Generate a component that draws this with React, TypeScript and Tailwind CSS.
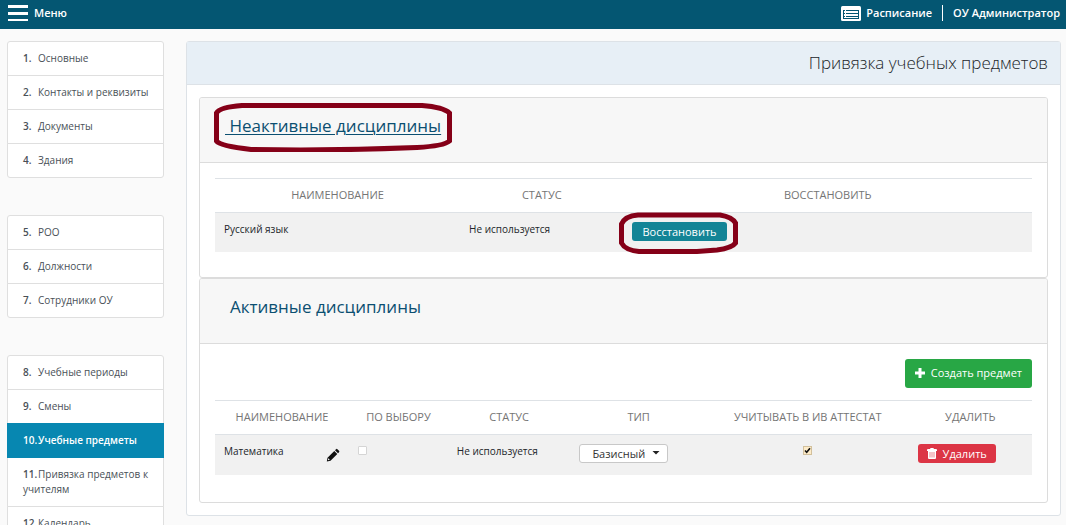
type MenuItem = { n: number; label: string; active?: boolean };

const groups: MenuItem[][] = [
  [
    { n: 1, label: "Основные" },
    { n: 2, label: "Контакты и реквизиты" },
    { n: 3, label: "Документы" },
    { n: 4, label: "Здания" },
  ],
  [
    { n: 5, label: "РОО" },
    { n: 6, label: "Должности" },
    { n: 7, label: "Сотрудники ОУ" },
  ],
  [
    { n: 8, label: "Учебные периоды" },
    { n: 9, label: "Смены" },
    { n: 10, label: "Учебные предметы", active: true },
    { n: 11, label: "Привязка предметов к учителям" },
    { n: 12, label: "Календарь" },
  ],
];

function TopBar() {
  return (
    <header className="flex h-[29px] shrink-0 items-center justify-between bg-[#045672] pr-[6px] pb-[3px] pl-2 text-[11px] leading-4 font-semibold text-white">
      <button type="button" className="flex items-center gap-[6px]">
        <svg viewBox="0 0 20 16" className="h-4 w-5" fill="currentColor" aria-hidden="true">
          <rect width="20" height="3" />
          <rect y="7" width="20" height="3" />
          <rect y="14" width="20" height="2" />
        </svg>
        Меню
      </button>
      <div className="flex items-center">
        <a href="#schedule" className="flex items-center gap-[5px] pr-[10px]">
          <svg viewBox="0 0 20 15" className="h-[15px] w-5" aria-hidden="true">
            <rect width="20" height="15" rx="1.5" fill="#fff" />
            <path
              d="M2 4.5h2M5 4.5h13M2 7.5h2M5 7.5h13M2 10.5h2M5 10.5h13M2 12.5h16M2.5 4v9M17.5 4v9"
              fill="none"
              stroke="#045672"
              strokeWidth="1"
            />
          </svg>
          Расписание
        </a>
        <a href="#account" className="border-l border-white pl-[10px]">
          ОУ Администратор
        </a>
      </div>
    </header>
  );
}

function SideMenu() {
  return (
    <nav className="flex w-[157px] shrink-0 flex-col gap-[37px]">
      {groups.map((items) => (
        <ul key={items[0].n}>
          {items.map((item) => (
            <li key={item.n} className="group -mb-px last:mb-0">
              <a
                href={`#item-${item.n}`}
                className={
                  item.active
                    ? "relative block border border-[#0787b1] bg-[#0787b1] py-[9px] pr-3 pl-[15px] text-[10px] leading-[15px] font-semibold text-white"
                    : "block border border-[#dfdfdf] bg-white py-[9px] pr-3 pl-[15px] text-[10px] leading-[15px] text-[#495057] group-first:rounded-t-[3px] group-last:rounded-b-[3px]"
                }
              >
                <span className="inline-block min-w-[15px] font-semibold">{item.n}.</span>
                {item.label}
              </a>
            </li>
          ))}
        </ul>
      ))}
    </nav>
  );
}

const th = "pt-[7px] pb-[9px] text-center text-[11px] leading-[17px] font-normal text-[#757575]";
const td = "px-[9px] pt-[9px] align-top leading-[15px]";

function InactiveCard() {
  return (
    <section className="rounded-[3px] border border-[#dcdcdc] bg-white">
      <div className="h-[65px] rounded-t-[2px] border-b border-[#dcdcdc] bg-[#f7f7f7] px-[25px] pt-4">
        <h2 className="relative inline-block text-[17px] leading-6 whitespace-pre text-[#0b4f71] underline decoration-1 underline-offset-2">
          {" Неактивные дисциплины"}
          <svg
            viewBox="0 0 238 49"
            preserveAspectRatio="none"
            className="absolute -top-[11px] -left-[11px] h-[49px] w-[238px] max-w-none"
            fill="none"
            aria-hidden="true"
          >
            <path
              d="M28 2.5H208Q229 4 235.5 10V38Q230 43 203 44.5Q120 48 37 46.5Q6 43 2.5 38V10Q6 4 28 2.5Z"
              stroke="#850018"
              strokeWidth="5"
            />
          </svg>
        </h2>
      </div>
      <div className="px-[15px] pt-[15px] pb-[25px]">
        <table className="w-full table-fixed border-collapse">
          <thead>
            <tr className="border-y border-[#dee2e6]">
              <th className={`${th} w-[30%]`}>НАИМЕНОВАНИЕ</th>
              <th className={`${th} w-[20%]`}>СТАТУС</th>
              <th className={`${th} w-[50%]`}>ВОССТАНОВИТЬ</th>
            </tr>
          </thead>
          <tbody>
            <tr className="h-[39px] bg-[#f1f1f1]">
              <td className={td}>Русский язык</td>
              <td className={td}>Не используется</td>
              <td className={td}>
                <span className="relative inline-block">
                  <button
                    type="button"
                    className="block h-[19px] rounded-[3px] bg-[#138496] px-[10px] text-[11px] leading-[19px] text-white"
                  >
                    Восстановить
                  </button>
                  <svg
                    viewBox="0 0 119 42"
                    preserveAspectRatio="none"
                    className="absolute -top-[10px] -left-[13px] h-[42px] w-[119px] max-w-none"
                    fill="none"
                    aria-hidden="true"
                  >
                    <path
                      d="M19 3H101Q113 5 116.5 11V31Q113 36 98 38L78 39.5H20Q6 38 2.5 31V12Q6 4 19 3Z"
                      stroke="#850018"
                      strokeWidth="5"
                    />
                  </svg>
                </span>
              </td>
            </tr>
          </tbody>
        </table>
      </div>
    </section>
  );
}

function ActiveCard() {
  return (
    <section className="rounded-[3px] border border-[#dcdcdc] bg-white">
      <div className="h-[65px] rounded-t-[2px] border-b border-[#dcdcdc] bg-[#f7f7f7] px-[30px] pt-4">
        <h2 className="text-[17px] leading-6 text-[#0b4f71]">Активные дисциплины</h2>
      </div>
      <div className="px-[15px] pt-[15px] pb-[27px]">
        <div className="mb-3 flex justify-end">
          <button
            type="button"
            className="flex h-[29px] items-center gap-[6px] rounded-[3px] bg-[#28a745] px-[10px] text-[11px] leading-4 font-medium text-white"
          >
            <svg viewBox="0 0 10 10" className="size-[10px]" fill="currentColor" aria-hidden="true">
              <path d="M3.5 0h3v3.5H10v3H6.5V10h-3V6.5H0v-3h3.5z" />
            </svg>
            Создать предмет
          </button>
        </div>
        <table className="w-full table-fixed border-collapse">
          <thead>
            <tr className="border-y border-[#dee2e6]">
              <th className={`${th} w-[16.4%]`}>НАИМЕНОВАНИЕ</th>
              <th className={`${th} w-[12.1%]`}>ПО ВЫБОРУ</th>
              <th className={`${th} w-[15%]`}>СТАТУС</th>
              <th className={`${th} w-[16.7%]`}>ТИП</th>
              <th className={`${th} w-[24.7%]`}>УЧИТЫВАТЬ В ИВ АТТЕСТАТ</th>
              <th className={`${th} w-[15.1%]`}>УДАЛИТЬ</th>
            </tr>
          </thead>
          <tbody>
            <tr className="h-[41px] bg-[#f1f1f1]">
              <td className={td}>
                <div className="flex justify-between">
                  Математика
                  <button type="button" aria-label="Редактировать" className="pt-1">
                    <svg viewBox="0 0 14 14" className="size-[14px]" fill="#111" aria-hidden="true">
                      <path
                        d="M10 1.2q.7-.7 1.4 0l1.6 1.6q.7.7 0 1.4l-1 1-3-3zM8.3 2.9l3 3-6.8 6.8-3.7.9.7-3.9zM2.3 10.3l-.4 1.9 1.9-.4z"
                        fillRule="evenodd"
                      />
                    </svg>
                  </button>
                </div>
              </td>
              <td className={td}>
                <input
                  type="checkbox"
                  aria-label="По выбору"
                  className="mt-[2px] block size-[9px] appearance-none rounded-[1px] border border-[#d5d5d5] bg-white"
                />
              </td>
              <td className={td}>Не используется</td>
              <td className={td}>
                <div className="relative w-[89px]">
                  <select
                    aria-label="Тип"
                    className="block h-[19px] w-full appearance-none rounded-[3px] border border-[#c8c8c8] bg-white pl-3 text-[11px] leading-[17px] text-[#333]"
                  >
                    <option>Базисный</option>
                  </select>
                  <svg
                    viewBox="0 0 8 4"
                    className="pointer-events-none absolute top-[7px] right-2 h-1 w-2"
                    fill="#222"
                    aria-hidden="true"
                  >
                    <path d="M0.5 0h7L4 3.5z" />
                  </svg>
                </div>
              </td>
              <td className={td}>
                <div className="relative mx-auto mt-[2px] size-[9px]">
                  <input
                    type="checkbox"
                    defaultChecked
                    aria-label="Учитывать в ИВ аттестат"
                    className="block size-[9px] appearance-none border border-[#d2c09c] bg-[#fdebc8]"
                  />
                  <svg
                    viewBox="0 0 9 9"
                    className="pointer-events-none absolute inset-0 size-[9px]"
                    fill="none"
                    stroke="#111"
                    strokeWidth="1.6"
                    aria-hidden="true"
                  >
                    <path d="M2 4.5 3.7 6.3 7 2.2" />
                  </svg>
                </div>
              </td>
              <td className={td}>
                <button
                  type="button"
                  className="flex h-[19px] items-center gap-[6px] rounded-[3px] bg-[#dc3545] px-[9px] text-[11px] leading-[19px] text-white"
                >
                  <svg viewBox="0 0 10 11" className="h-[11px] w-[10px]" aria-hidden="true">
                    <path
                      d="M3 1q.2-1 1-1h2q.8 0 1 1h2q1 0 1 1v1H0V2q0-1 1-1zM1 3h8v7q0 1-1 1H2q-1 0-1-1z"
                      fill="#fff"
                    />
                    <path d="M3 4v5.5M5 4v5.5M7 4v5.5" stroke="#dc3545" strokeWidth=".6" />
                  </svg>
                  Удалить
                </button>
              </td>
            </tr>
          </tbody>
        </table>
      </div>
    </section>
  );
}

export default function App() {
  return (
    <div className="flex h-screen flex-col overflow-hidden bg-[#fafafa] font-['Open_Sans','Noto_Sans',sans-serif] text-[10px] text-[#212529]">
      <TopBar />
      <div className="flex items-start gap-[22px] pt-3 pr-[5px] pl-[7px]">
        <SideMenu />
        <main className="min-w-0 flex-1 rounded-[3px] border border-[#dde2e7] bg-white">
          <div className="border-b border-[#dde2e7] bg-[#e7eff6] px-3 py-[9px]">
            <h1 className="text-right text-[17px] leading-6 font-light">Привязка учебных предметов</h1>
          </div>
          <div className="p-3">
            <InactiveCard />
            <ActiveCard />
          </div>
        </main>
      </div>
    </div>
  );
}
